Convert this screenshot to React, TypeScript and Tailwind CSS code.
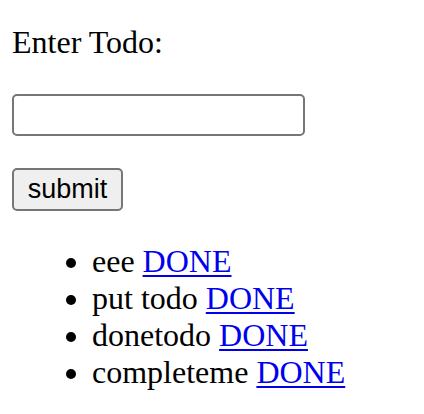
import { useState } from 'react'

const todos = ['eee', 'put todo', 'donetodo', 'completeme']

export default function App() {
  const [text, setText] = useState('')

  return (
    <div className="min-h-screen bg-white pl-[12px] pt-[24px] text-black font-['Liberation_Serif','Times_New_Roman',serif] text-[32px] leading-[37px]">
      {/* form */}
      <form onSubmit={(e) => e.preventDefault()}>
        <p>Enter Todo:</p>
        <input
          value={text}
          onChange={(e) => setText(e.target.value)}
          className="mt-[33px] block h-[42px] w-[293px] rounded-[5px] border-2 border-[#767676] bg-white px-1 text-[26px] outline-none"
        />
        <button
          type="submit"
          className="mt-[32px] block h-[43px] w-[111px] rounded-[5px] border-2 border-[#767676] bg-[#efefef] font-['Liberation_Sans',Arial,sans-serif] text-[27px] leading-none text-black"
        >
          submit
        </button>
      </form>

      {/* list */}
      <ul className="mt-[32px] list-disc pl-[80px]">
        {todos.map((t) => (
          <li key={t}>
            {t}{' '}
            <a href="#" className="text-[#0000ee] underline decoration-2 underline-offset-[3px]">
              DONE
            </a>
          </li>
        ))}
      </ul>
    </div>
  )
}
